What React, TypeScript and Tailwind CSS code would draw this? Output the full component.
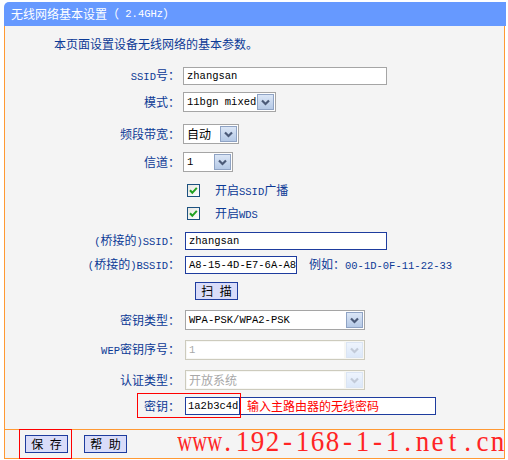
import React from "react";

const LBL = "text-[#0c3a96]";

function Mx({ t }: { t: string }) {
  const parts = t.split(/([\x20-\x7E]+)/).filter((s) => s.length > 0);
  return (
    <>
      {parts.map((s, i) =>
        /^[\x20-\x7E]+$/.test(s) ? (
          <span key={i} className="font-['Liberation_Mono',monospace] text-[10.5px] whitespace-pre">
            {s}
          </span>
        ) : (
          <span key={i}>{s}</span>
        )
      )}
    </>
  );
}

function Chevron({ disabled }: { disabled?: boolean }) {
  return (
    <svg width="15" height="16" viewBox="0 0 15 16">
      <path
        d="M4 6.5 L7.5 10 L11 6.5"
        fill="none"
        stroke={disabled ? "#c2cad8" : "#4b5a78"}
        strokeWidth="2.2"
      />
    </svg>
  );
}

function Select({ w, text, disabled }: { w: string; text: string; disabled?: boolean }) {
  return (
    <div
      className={`${w} h-[20px] flex items-stretch p-[1px] border ${
        disabled ? "border-[#cdcbbd] bg-[#f7f7f4]" : "border-[#a5a5a5] bg-white"
      }`}
    >
      <div
        className={`flex-1 flex items-center pl-[2px] overflow-hidden whitespace-nowrap ${
          disabled ? "text-[#a8a8a8] bg-white mr-[2px]" : "text-black"
        }`}
      >
        <Mx t={text} />
      </div>
      <div
        className={`w-[17px] shrink-0 flex items-center justify-center border ${
          disabled
            ? "border-[#dbe5f4] bg-gradient-to-b from-[#eef4fd] to-[#dce8f9]"
            : "border-[#8fa3c4] bg-gradient-to-b from-[#dbe6f6] to-[#b5c9e6]"
        }`}
      >
        <Chevron disabled={disabled} />
      </div>
    </div>
  );
}

function Checkbox() {
  return (
    <svg width="13" height="13" viewBox="0 0 13 13" className="block">
      <defs>
        <linearGradient id="cbg" x1="0" y1="0" x2="1" y2="1">
          <stop offset="0" stopColor="#e6e6e0" />
          <stop offset="1" stopColor="#ffffff" />
        </linearGradient>
      </defs>
      <rect x="0.5" y="0.5" width="12" height="12" fill="url(#cbg)" stroke="#1c5180" />
      <path d="M3 6.3 L5.3 8.8 L9.8 3.8" fill="none" stroke="#21a121" strokeWidth="2" />
    </svg>
  );
}

function Row({
  label,
  mt,
  h,
  children,
  gap = "ml-[3px]",
}: {
  label?: string;
  mt: string;
  h: string;
  children: React.ReactNode;
  gap?: string;
}) {
  return (
    <div className={`flex items-center ${mt} ${h}`}>
      <div className={`w-[175px] shrink-0 text-right ${LBL} whitespace-nowrap`}>
        {label ? <Mx t={label} /> : null}
      </div>
      <div className={`${gap} flex items-center h-full`}>{children}</div>
    </div>
  );
}

function Btn({ text }: { text: string }) {
  return (
    <div className="w-[43px] h-[18px] border border-[#1e3c9e] bg-[#d9dcf9] flex items-center justify-center text-black">
      <Mx t={text} />
    </div>
  );
}

const WATERMARK = "www.192-168-1-1.net.cn";

export default function App() {
  return (
    <div className="w-[508px] h-[460px] bg-white pt-[2px] pl-[4px] relative overflow-hidden text-[12px] leading-none font-['Noto_Sans_CJK_SC',sans-serif]">
      <div className="w-[502px] h-[24px] bg-[#6699ff] rounded-tl-[5px] flex items-center pl-[7px] text-white">
        <Mx t="无线网络基本设置（ 2.4GHz）" />
      </div>
      <div className="w-[501px] h-[433px] bg-[#f4f4f4] border-x border-[#ff9933] flex flex-col">
        <div className="flex flex-col">
          <div className={`mt-[10px] h-[16px] flex items-center pl-[49px] ${LBL}`}>
            本页面设置设备无线网络的基本参数。
          </div>

          <Row label="SSID号：" mt="mt-[15px]" h="h-[18px]">
            <div className="w-[204px] h-[18px] border border-[#a5a5a5] bg-white flex items-center pl-[3px]">
              <Mx t="zhangsan" />
            </div>
          </Row>

          <Row label="模式：" mt="mt-[7px]" h="h-[20px]">
            <Select w="w-[93px]" text="11bgn mixed" />
          </Row>

          <Row label="频段带宽：" mt="mt-[12px]" h="h-[20px]">
            <Select w="w-[56px]" text="自动" />
          </Row>

          <Row label="信道：" mt="mt-[8px]" h="h-[20px]">
            <Select w="w-[50px]" text="1" />
          </Row>

          <Row mt="mt-[12px]" h="h-[13px]" gap="ml-[7px]">
            <Checkbox />
            <span className={`ml-[15px] ${LBL} whitespace-nowrap`}>
              <Mx t="开启SSID广播" />
            </span>
          </Row>

          <Row mt="mt-[10px]" h="h-[13px]" gap="ml-[7px]">
            <Checkbox />
            <span className={`ml-[15px] ${LBL} whitespace-nowrap`}>
              <Mx t="开启WDS" />
            </span>
          </Row>

          <Row label="(桥接的)SSID：" mt="mt-[12px]" h="h-[18px]" gap="ml-[5px]">
            <div className="w-[202px] h-[18px] border border-[#1e3c9e] bg-white flex items-center pl-[3px]">
              <Mx t="zhangsan" />
            </div>
          </Row>

          <Row label="(桥接的)BSSID：" mt="mt-[6px]" h="h-[18px]" gap="ml-[5px]">
            <div className="w-[112px] h-[18px] border border-[#1e3c9e] bg-white flex items-center pl-[3px] overflow-hidden whitespace-nowrap">
              <Mx t="A8-15-4D-E7-6A-A8" />
            </div>
            <span className={`ml-[12px] ${LBL} whitespace-nowrap`}>
              <Mx t="例如：00-1D-0F-11-22-33" />
            </span>
          </Row>

          <Row mt="mt-[8px]" h="h-[18px]" gap="ml-[15px]">
            <Btn text="扫 描" />
          </Row>

          <Row label="密钥类型：" mt="mt-[10px]" h="h-[20px]" gap="ml-[5px]">
            <Select w="w-[180px]" text="WPA-PSK/WPA2-PSK" />
          </Row>

          <Row label="WEP密钥序号：" mt="mt-[10px]" h="h-[20px]" gap="ml-[5px]">
            <Select w="w-[180px]" text="1" disabled />
          </Row>

          <Row label="认证类型：" mt="mt-[10px]" h="h-[20px]" gap="ml-[5px]">
            <Select w="w-[180px]" text="开放系统" disabled />
          </Row>

          <div className="relative">
            <Row label="密钥：" mt="mt-[7px]" h="h-[18px]" gap="ml-[5px]">
              <div className="w-[55px] h-[18px] border border-[#1e3c9e] bg-white flex items-center pl-[2px] whitespace-nowrap">
                <Mx t="1a2b3c4d" />
              </div>
              <div className="-ml-[1px] w-[197px] h-[18px] border border-[#1e3c9e] bg-white flex items-center pl-[7px] text-[#ff0000] whitespace-nowrap">
                输入主路由器的无线密码
              </div>
            </Row>
            <div className="absolute left-[132px] top-[3px] w-[104px] h-[25px] border border-[#ff0000]" />
          </div>
        </div>

        <div className="mt-[14px] relative flex-1 border-y border-[#ff9933] flex items-start pt-[5px] pl-[20px] gap-[16px]">
          <Btn text="保 存" />
          <Btn text="帮 助" />
          <div className="absolute left-[14px] -top-[1px] w-[53px] h-[30px] border border-[#ff0000]" />
          <div className="absolute right-[-1px] bottom-[1px] flex origin-bottom scale-y-[1.12] font-['Liberation_Serif',serif] text-[27px] leading-none text-[#ff2424] whitespace-nowrap">
            {WATERMARK.split("").map((c, i) => (
              <span key={i} className="inline-block w-[15px] text-center overflow-visible">
                {c === "w" ? (
                  <span className="inline-block scale-x-[0.76]">{c}</span>
                ) : (
                  c
                )}
              </span>
            ))}
          </div>
        </div>
      </div>
    </div>
  );
}
